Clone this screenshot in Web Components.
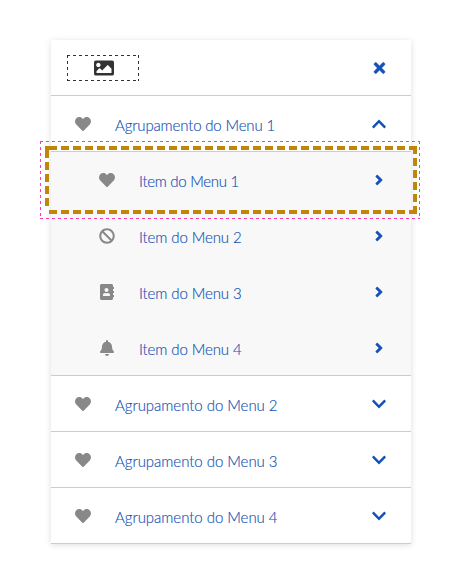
<!DOCTYPE html>
<html lang="pt-BR">
<head>
<meta charset="utf-8">
<title>Menu</title>
<style>
body{margin:0;background:#fff;font-family:Lato,"Open Sans",sans-serif;color:#1351b4}
</style>
</head>
<body>
<menu-stage></menu-stage>
<script>
const ICONS={
heart:[512,'M462.3 62.6C407.5 15.9 326 24.3 275.7 76.2L256 96.5l-19.7-20.3C186.1 24.3 104.5 15.9 49.7 62.6c-62.8 53.6-66.1 149.8-9.9 207.9l193.5 199.8c12.5 12.9 32.8 12.9 45.3 0l193.5-199.8c56.3-58.1 53-154.3-9.8-207.9z'],
ban:[512,'M256 8C119.034 8 8 119.033 8 256s111.034 248 248 248 248-111.034 248-248S392.967 8 256 8zm130.108 117.892c65.448 65.448 70 165.481 20.677 235.637L150.47 105.216c70.204-49.356 170.226-44.735 235.638 20.676zM125.892 386.108c-65.448-65.448-70-165.481-20.677-235.637L361.53 406.784c-70.203 49.356-170.226 44.736-235.638-20.676z'],
book:[448,'M436 160c6.6 0 12-5.4 12-12v-40c0-6.6-5.4-12-12-12h-20V48c0-26.5-21.5-48-48-48H48C21.5 0 0 21.5 0 48v416c0 26.5 21.5 48 48 48h320c26.5 0 48-21.5 48-48v-48h20c6.6 0 12-5.4 12-12v-40c0-6.6-5.4-12-12-12h-20v-64h20c6.6 0 12-5.4 12-12v-40c0-6.6-5.4-12-12-12h-20v-64h20zm-228-32c35.3 0 64 28.7 64 64s-28.7 64-64 64-64-28.7-64-64 28.7-64 64-64zm112 236.8c0 10.6-10 19.2-22.4 19.2H118.4C106 384 96 375.4 96 364.8v-19.2c0-31.8 30.1-57.6 67.2-57.6h5c12.3 5.1 25.7 8 39.8 8s27.6-2.9 39.8-8h5c37.1 0 67.2 25.8 67.2 57.6v19.2z'],
bell:[448,'M224 512c35.32 0 63.97-28.65 63.97-64H160.03c0 35.35 28.65 64 63.97 64zm215.39-149.71c-19.32-20.76-55.47-51.99-55.47-154.29 0-77.7-54.48-139.9-127.94-155.16V32c0-17.67-14.32-32-31.98-32s-31.98 14.33-31.98 32v20.84C118.56 68.1 64.08 130.3 64.08 208c0 102.3-36.15 133.53-55.47 154.29-6 6.45-8.66 14.16-8.61 21.71.11 16.4 12.98 32 32.1 32h383.8c19.12 0 32-15.6 32.1-32 .05-7.55-2.61-15.27-8.61-21.71z'],
image:[512,'M464 448H48c-26.51 0-48-21.49-48-48V112c0-26.51 21.49-48 48-48h416c26.51 0 48 21.49 48 48v288c0 26.51-21.49 48-48 48zM112 120c-30.928 0-56 25.072-56 56s25.072 56 56 56 56-25.072 56-56-25.072-56-56-56zM64 384h384V272l-87.515-87.515c-4.686-4.686-12.284-4.686-16.971 0L208 320l-55.515-55.515c-4.686-4.686-12.284-4.686-16.971 0L64 336v48z'],
close:[352,'M242.72 256l100.07-100.07c12.28-12.28 12.28-32.19 0-44.48l-22.24-22.24c-12.28-12.28-32.19-12.28-44.48 0L176 189.28 75.93 89.21c-12.28-12.28-32.19-12.28-44.48 0L9.21 111.45c-12.28 12.28-12.28 32.19 0 44.48L109.28 256 9.21 356.07c-12.28 12.28-12.28 32.19 0 44.48l22.24 22.24c12.28 12.28 32.2 12.28 44.48 0L176 322.72l100.07 100.07c12.28 12.28 32.2 12.28 44.48 0l22.24-22.24c12.28-12.28 12.28-32.19 0-44.48L242.72 256z','',18],
down:[448,'M207.029 381.476L12.686 187.132c-9.373-9.373-9.373-24.569 0-33.941l22.667-22.667c9.357-9.357 24.522-9.375 33.901-.04L224 284.505l154.745-154.021c9.379-9.335 24.544-9.317 33.901.04l22.667 22.667c9.373 9.373 9.373 24.569 0 33.941L240.971 381.476c-9.373 9.372-24.569 9.372-33.942 0z'],
right:[256,'M224.3 273l-136 136c-9.4 9.4-24.6 9.4-33.9 0l-22.6-22.6c-9.4-9.4-9.4-24.6 0-33.9l96.4-96.4-96.4-96.4c-9.4-9.4-9.4-24.6 0-33.9L54.3 103c9.4-9.4 24.6-9.4 33.9 0l136 136c9.5 9.4 9.5 24.6.1 34z','',14]
};
ICONS.up=[448,ICONS.down[1],'rotate(180 224 256)'];

const define=(name,html,init)=>customElements.define(name,class extends HTMLElement{
  connectedCallback(){
    if(this.shadowRoot)return;
    this.attachShadow({mode:'open'}).innerHTML=typeof html==='function'?html(this):html;
    if(init)init(this);
  }
});

define('menu-icon',el=>{
  const [w,d,t,bold]=ICONS[el.getAttribute('name')];
  const s=+(el.getAttribute('size')||16);
  return `<style>:host{display:flex;align-items:center;justify-content:center;width:${Math.max(s,16)}px;height:${s}px;flex:none}svg{display:block;overflow:visible}</style>
  <svg width="${w/512*s}" height="${s}" viewBox="0 0 ${w} 512" fill="currentColor"><path d="${d}"${t?` transform="${t}"`:''}${bold?` stroke="currentColor" stroke-width="${bold}"`:''}/></svg>`;
});

/* Label whose tracking is spread so that the text fills the given width. */
define('menu-label',`<style>:host{display:block;flex:1;font-size:15px;font-weight:300;line-height:20px;padding-top:1px;white-space:nowrap;-webkit-text-stroke:.15px currentColor}</style><span><slot></slot></span>`,el=>{
  const span=el.shadowRoot.querySelector('span');
  const free=+el.getAttribute('width')-span.getBoundingClientRect().width;
  span.style.letterSpacing=free/el.textContent.length+'px';
});

define('menu-row',el=>`<style>
:host{display:flex;align-items:center;box-sizing:border-box;height:56px;padding:0 24px}
:host([level="2"]){padding-left:48px}
:host([line]){box-shadow:inset 0 -1px #ccc}
.lead{color:#888;margin-right:24px}
</style>
<menu-icon class="lead" name="${el.getAttribute('icon')}"></menu-icon>
<menu-label width="${el.getAttribute('width')}">${el.getAttribute('label')}</menu-label>
<menu-icon name="${el.getAttribute('action')}"></menu-icon>`);

define('menu-header',`<style>
:host{display:flex;align-items:center;justify-content:space-between;box-sizing:border-box;height:56px;padding:0 24px 0 16px;box-shadow:inset 0 -1px #ccc}
.logo{display:grid;place-items:center;width:72px;height:26px;color:#333;background:
 repeating-linear-gradient(90deg,#333 0 3px,transparent 3px 6px) 0 0/100% 1px no-repeat,
 repeating-linear-gradient(90deg,#333 0 3px,transparent 3px 6px) 0 100%/100% 1px no-repeat,
 repeating-linear-gradient(#333 0 3px,transparent 3px 6px) 0 0/1px 100% no-repeat,
 repeating-linear-gradient(#333 0 3px,transparent 3px 6px) 100% 0/1px 100% no-repeat}
.logo menu-icon{margin-left:1px}
</style><div class="logo"><menu-icon name="image" size="20"></menu-icon></div><menu-icon name="close"></menu-icon>`);

define('focus-outline',`<style>:host{position:absolute;left:40px;top:141px;width:380px;height:78px;pointer-events:none}svg{display:block}</style>
<svg width="380" height="78" fill="none">
<g stroke="#ff38b9" stroke-dasharray="3 3"><path d="M0 .5H380M379.5 0V78M0 77.5H380M.5 0V78"/></g>
<g stroke="#c2850c" stroke-width="4" stroke-dasharray="8 4"><path d="M9 7H377M375 5V73M9 71H377M7 9V69"/></g>
<path fill="#c2850c" d="M5 5h4v4h-4z"/>
</svg>`);

define('menu-panel',`<style>
:host{display:block;width:360px;background:#fff;box-shadow:0 1px 6px rgba(51,51,51,.16)}
.items{background:#f8f8f8}
</style>
<menu-header></menu-header>
<menu-row line icon="heart" label="Agrupamento do Menu 1" width="160" action="up"></menu-row>
<div class="items">
<menu-row level="2" icon="heart" label="Item do Menu 1" width="100" action="right"></menu-row>
<menu-row level="2" icon="ban" label="Item do Menu 2" width="102.5" action="right"></menu-row>
<menu-row level="2" icon="book" label="Item do Menu 3" width="102.5" action="right"></menu-row>
<menu-row line level="2" icon="bell" label="Item do Menu 4" width="102.5" action="right"></menu-row>
</div>
<menu-row line icon="heart" label="Agrupamento do Menu 2" width="162.5" action="down"></menu-row>
<menu-row line icon="heart" label="Agrupamento do Menu 3" width="162.5" action="down"></menu-row>
<menu-row line icon="heart" label="Agrupamento do Menu 4" width="162.5" action="down"></menu-row>`);

define('menu-stage',`<style>:host{display:block;position:relative;box-sizing:border-box;height:587px;padding:40px 0 0 51px}</style>
<menu-panel></menu-panel><focus-outline></focus-outline>`);
</script>
</body>
</html>
